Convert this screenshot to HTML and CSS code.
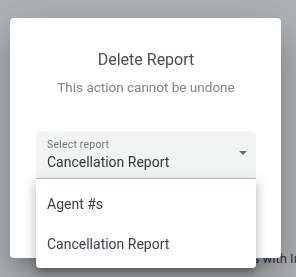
FILE: index.html
```html
<!DOCTYPE html>
<html lang="en">
<head>
    <meta charset="UTF-8">
    <meta name="viewport" content="width=device-width, initial-scale=1.0">
    <title>Delete Report</title>
    <link rel="stylesheet" href="styles.css">
</head>
<body>

    <div class="page">
        <p class="page-note">Reports with Insights</p>
    </div>

    <div class="backdrop">
        <div class="dialog">
            <h2 class="dialog-title">Delete Report</h2>
            <p class="dialog-sub">This action cannot be undone</p>

            <div class="select-wrap">
                <div class="select">
                    <div class="select-text">
                        <span class="select-label">Select report</span>
                        <span class="select-value">Cancellation Report</span>
                    </div>
                    <span class="arrow"></span>
                </div>
                <ul class="menu">
                    <li class="menu-item">Agent #s</li>
                    <li class="menu-item">Cancellation Report</li>
                </ul>
            </div>
        </div>
    </div>

</body>
</html>
```

FILE: styles.css
```css
html, body {
    margin: 0;
    height: 100%;
    overflow: hidden;
}
body {
    font-family: Roboto, "Liberation Sans", sans-serif;
    background-color: #b0b3b6;
}
.page {
    width: 296px;
    overflow: hidden;
    padding: 251px 0 0 214px;
    box-sizing: border-box;
    white-space: nowrap;
}
.page-note {
    margin: 0;
    font-size: 13px;
    color: #2a3444;
}
.backdrop {
    position: fixed;
    inset: 0;
    padding: 18px 15px 0 10px;
}
.dialog {
    width: 271px;
    height: 240px;
    box-sizing: border-box;
    background: white;
    border-radius: 4px;
    padding: 30px 25px 0 26px;
    display: flex;
    flex-direction: column;
    align-items: center;
    box-shadow: 0 11px 15px -7px rgba(0,0,0,.2), 0 24px 38px 3px rgba(0,0,0,.14), 0 9px 46px 8px rgba(0,0,0,.12);
}
.dialog-title {
    margin: 0;
    font-size: 16px;
    line-height: 24px;
    font-weight: 400;
    color: #474c54;
}
.dialog-sub {
    margin: 5px 0 0;
    font-size: 13.5px;
    line-height: 20px;
    color: #7f848b;
}
.select-wrap {
    position: relative;
    align-self: stretch;
    margin-top: 34px;
}
.select {
    display: flex;
    align-items: center;
    background: #f2f3f3;
    border-radius: 6px 6px 0 0;
    border-bottom: 1px solid #b3bcc6;
    padding: 6px 9px 6px 11px;
}
.select-text {
    flex: 1;
    display: flex;
    flex-direction: column;
}
.select-label {
    font-size: 10.5px;
    line-height: 15px;
    color: #6f747a;
    letter-spacing: .2px;
}
.select-value {
    font-size: 14px;
    line-height: 20px;
    color: #33373c;
}
.arrow {
    width: 0;
    height: 0;
    border-left: 4px solid transparent;
    border-right: 4px solid transparent;
    border-top: 4px solid #6a6e73;
    margin-bottom: 4px;
}
.menu {
    position: absolute;
    top: 100%;
    left: 0;
    right: 0;
    margin: 0;
    padding: 5px 0 4px;
    list-style: none;
    background: white;
    border-radius: 0 0 4px 4px;
    box-shadow: 0 5px 5px -3px rgba(0,0,0,.2), 0 8px 10px 1px rgba(0,0,0,.14), 0 3px 14px 2px rgba(0,0,0,.12);
}
.menu-item {
    padding: 0 11px;
    height: 40px;
    line-height: 40px;
    font-size: 14px;
    color: #3a3e44;
}
```
